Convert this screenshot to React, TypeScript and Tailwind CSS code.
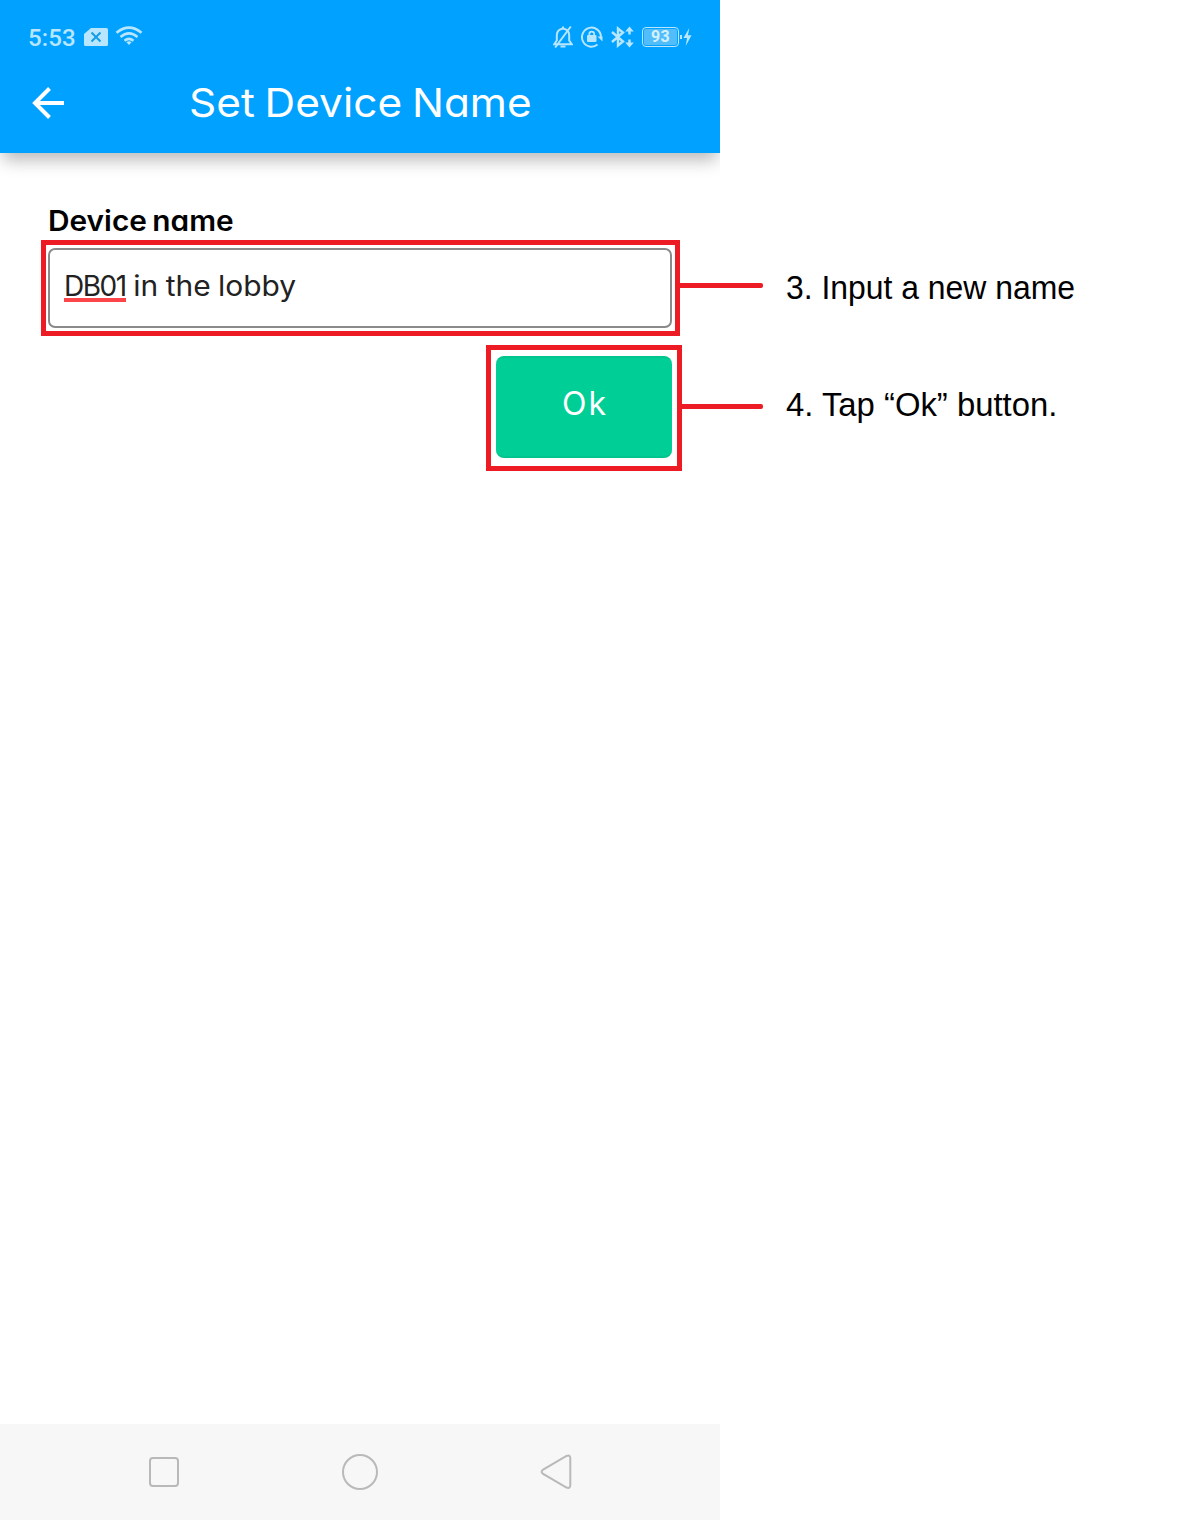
import type { ReactNode } from "react";

function StatusBar() {
  return (
    <div className="flex h-[73px] items-start justify-between pl-7 pr-[28px] pt-[24px] text-[#b8e6ff]">
      <div className="flex h-[26px] items-center">
        <span className="w-[56px] pt-px font-['Roboto',sans-serif] text-[24px] leading-[26px] font-medium tracking-[0.1px]">5:53</span>
        <svg width="24" height="18" viewBox="0 0 24 18">
          <path d="M7 0H22.5Q24 0 24 1.5V16.500Q24 18 22.500 18H1.500Q0 18 0 16.500V6Z" fill="currentColor" />
          <path d="M7.500 4.500l9 9M16.500 4.500l-9 9" stroke="#149be8" strokeWidth="1.900" />
        </svg>
        <svg className="relative -top-px ml-[7px]" width="28" height="20" viewBox="0 0 28 20" fill="none" stroke="currentColor" strokeWidth="2.600">
          <path d="M1.500 6.800Q14-3.500 26.500 6.800M5.500 10.900Q14 4 22.500 10.900M9.500 14.700Q14 11 18.500 14.700" />
          <path d="M11.500 16.200Q14 14.200 16.500 16.200L14 19Z" fill="currentColor" stroke="none" />
        </svg>
      </div>
      <div className="flex h-[26px] items-center">
        <svg width="20" height="24" viewBox="0 0 20 24" fill="none" stroke="currentColor" strokeWidth="2">
          <path d="M1.200 19.200H18.800L16.200 15.500V10Q16 4.500 10 3.500Q4 4.500 3.800 10V15.500Z" />
          <path d="M10 1.500v2M7.500 21.500h5M17.800 1.500L2.200 22.500" />
        </svg>
        <svg className="ml-2" width="22" height="22" viewBox="0 0 22 22" fill="none" stroke="currentColor" strokeWidth="2">
          <path d="M16.500 18.500A9.500 9.500 0 1 1 20 11" />
          <path d="M16.500 10.500h5v5z" fill="currentColor" stroke="none" />
          <rect x="6" y="9" width="9.500" height="7" rx="1" fill="currentColor" stroke="none" />
          <path d="M8.300 10V8a2.450 2.450 0 0 1 4.900 0V10" strokeWidth="1.700" />
        </svg>
        <svg className="ml-2" width="23" height="22" viewBox="0 0 23 22" fill="none" stroke="currentColor" strokeWidth="2.400">
          <path d="M1 6L12 15.500L7 19.500V2.500L12 6.500L1 16M18.500 3v5.500M18.500 13.500v5.500" />
          <path d="M14.200 5.500L18.500 .5L22.800 5.500ZM14.200 16.500L18.500 21.500L22.800 16.500Z" fill="currentColor" stroke="none" />
        </svg>
        <span className="ml-2 flex h-5 w-[37px] items-center justify-center rounded-[4px] border border-[#b8e6ff] p-px">
          <span className="flex h-full w-full items-center justify-center rounded-[2px] bg-[#52bdfb] font-['Roboto',sans-serif] text-[16px] leading-none font-bold tracking-[0.4px] text-[#d2f1ff]">93</span>
        </span>
        <span className="ml-[1px] h-1 w-[2px] bg-[#b8e6ff]" />
        <svg className="ml-px" width="9" height="18" viewBox="0 0 9 20" fill="currentColor">
          <path d="M6.500 0L0 11H4L2.500 20L9 8H5Z" />
        </svg>
      </div>
    </div>
  );
}

function Callout({ children, lineClass, labelClass, label }: { children: ReactNode; lineClass: string; labelClass: string; label: string }) {
  return (
    <div className="flex items-center">
      {children}
      <span className={`h-[5px] rounded-r-[2px] bg-[#ed1c24] ${lineClass}`} />
      <span className={`ml-[23px] origin-left font-['Liberation_Sans',Arial,sans-serif] text-[33.5px] leading-[36px] whitespace-nowrap text-black ${labelClass}`}>{label}</span>
    </div>
  );
}

export default function App() {
  return (
    <div className="flex h-[1520px] w-[1196px] flex-col overflow-hidden bg-white font-['Inter',sans-serif] [font-feature-settings:'cv11']">
      <header className="h-[153px] w-[720px] bg-[#00a1ff] shadow-[0_10px_16px_-3px_rgba(0,0,0,0.28)] [clip-path:inset(0_0_-40px_0)]">
        <StatusBar />
        <div className="flex h-[60px] items-center pl-8 text-white">
          <svg width="33" height="32" viewBox="0 0 33 32" fill="none" stroke="currentColor" strokeWidth="4">
            <path d="M32 16H3M17.500 1.500L3 16L17.500 30.500" />
          </svg>
          <h1 className="ml-[124px] origin-left scale-x-[1.06] text-[40px] leading-[60px] font-normal whitespace-nowrap [word-spacing:-2px]">Set Device Name</h1>
        </div>
      </header>
      <main className="flex flex-1 flex-col pt-[48px]">
        <label className="ml-12 h-[39px] w-[180px] origin-left scale-x-[1.065] text-[28px] leading-[41px] font-semibold whitespace-nowrap text-black [word-spacing:-2px]">Device name</label>
        <div className="ml-[41px]">
          <Callout lineClass="w-[83px] -mt-[5px]" labelClass="scale-x-[0.952]" label="3. Input a new name">
            <div className="h-24 w-[639px] border-[5px] border-[#ed1c24] pr-[3px] pl-[2px] py-[3px]">
              <div className="flex h-20 items-start rounded-[7px] border-2 border-[#8a8a8a] pt-[18px] pl-[14px] text-[28px] leading-[36px] whitespace-pre text-[#222]">
                <span className="flex h-[34px] w-[62px] border-b-4 border-[#fb4549] tracking-[-1.5px]">DB01</span>
                <span className="origin-left scale-x-[1.07] [word-spacing:-1px]"> in the lobby</span>
              </div>
            </div>
          </Callout>
        </div>
        <div className="mt-[9px] ml-[486px]">
          <Callout lineClass="w-[81px] -mt-[3px]" labelClass="-mt-[7px] scale-x-[0.98]" label="4. Tap “Ok” button.">
            <div className="h-[126px] w-[196px] border-[5px] border-[#ed1c24] px-[5px] pt-[6px]">
              <button className="flex h-[102px] w-[176px] items-center justify-center rounded-[8px] border-y-2 border-[#00c48d] bg-[#00ce97] pb-[6px] pl-[2px] text-[32px] tracking-[2px] text-white">Ok</button>
            </div>
          </Callout>
        </div>
      </main>
      <nav className="flex h-24 w-[720px] items-center bg-[#f7f7f7] pl-[149px]">
        <span className="h-[30px] w-[30px] rounded-[4px] border-2 border-[#b9b9b9]" />
        <span className="ml-[163px] h-9 w-9 rounded-full border-2 border-[#b9b9b9]" />
        <svg className="ml-[162px]" width="32" height="36" viewBox="0 0 32 36" fill="none" stroke="#b9b9b9" strokeWidth="2">
          <path d="M2.700 15.900L26.500 2Q30 .5 30.300 4V31Q30.300 35 26.500 33.500L2.700 19.600Q.5 17.700 2.700 15.900Z" />
        </svg>
      </nav>
    </div>
  );
}
